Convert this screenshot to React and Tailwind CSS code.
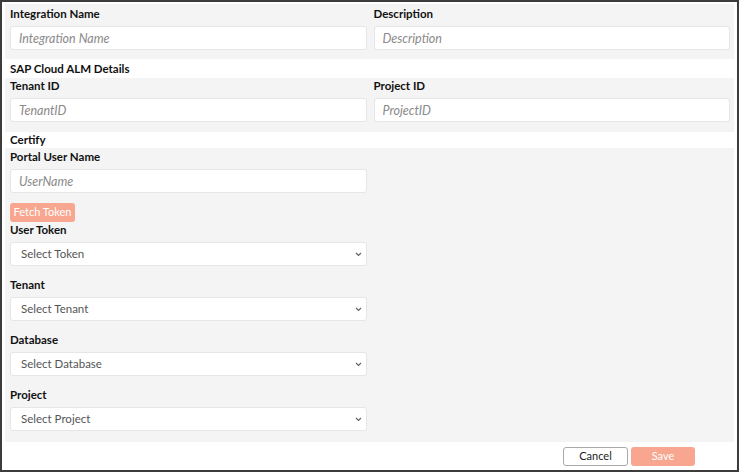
import React from 'react';

const font = { fontFamily: 'Lato, "Noto Sans", sans-serif' };

const TextField = ({ label, placeholder }) => (
  <div className="flex flex-col">
    <label className="text-[11.5px] font-bold leading-[16px] text-[#111] mb-[4px]">{label}</label>
    <input
      type="text"
      placeholder={placeholder}
      className="block h-[24px] w-full rounded-[3px] border border-[#e6e6e6] bg-white px-[8px] text-[12.5px] italic text-[#333] outline-none placeholder:text-[#8a8a8a]"
    />
  </div>
);

const SelectField = ({ label, placeholder }) => (
  <div className="flex flex-col mb-[11px]">
    <label className="text-[11.5px] font-bold leading-[16px] text-[#111] mb-[4px]">{label}</label>
    <div className="relative">
      <select className="block h-[24px] w-full appearance-none rounded-[3px] border border-[#e6e6e6] bg-white py-0 pl-[10px] text-[11.5px] leading-[22px] text-[#555] outline-none">
        <option>{placeholder}</option>
      </select>
      <svg className="pointer-events-none absolute right-[5px] top-[10px]" width="7" height="5" viewBox="0 0 7 5">
        <path d="M1 1l2.5 2.5L6 1" fill="none" stroke="#666" strokeWidth="1.2" />
      </svg>
    </div>
  </div>
);

export default function App() {
  return (
    <div style={font} className="w-[739px] h-[472px] border-2 border-[#3c3c3c] bg-white px-[3px] pt-[2px] flex flex-col">
      {/* Integration */}
      <div className="grid grid-cols-2 gap-x-[7px] bg-[#f4f4f4] pl-[5px] pr-[4px] pt-[2px] pb-[9px]">
        <TextField label="Integration Name" placeholder="Integration Name" />
        <TextField label="Description" placeholder="Description" />
      </div>

      <div className="px-[5px] text-[11.5px] font-bold leading-[19px] text-[#111]">SAP Cloud ALM Details</div>
      <div className="grid grid-cols-2 gap-x-[7px] bg-[#f4f4f4] pl-[5px] pr-[4px] pb-[10px]">
        <TextField label="Tenant ID" placeholder="TenantID" />
        <TextField label="Project ID" placeholder="ProjectID" />
      </div>

      <div className="px-[5px] text-[11.5px] font-bold leading-[16px] text-[#111]">Certify</div>
      <div className="grid grid-cols-2 gap-x-[7px] bg-[#f4f4f4] pl-[5px] pr-[4px] pt-[1px] pb-[0px]">
        <div className="flex flex-col">
          <TextField label="Portal User Name" placeholder="UserName" />
          <button className="mt-[10px] h-[19px] w-[65px] rounded-[3px] bg-[#f9a690] text-[11px] text-white">Fetch Token</button>
          <SelectField label="User Token" placeholder="Select Token" />
          <SelectField label="Tenant" placeholder="Select Tenant" />
          <SelectField label="Database" placeholder="Select Database" />
          <SelectField label="Project" placeholder="Select Project" />
        </div>
        <div />
      </div>

      <div className="flex justify-end gap-[3px] pr-[39px] pt-[5px]">
        <button className="h-[19px] w-[65px] rounded-[3px] border border-[#a9a9a9] bg-white text-[11px] text-[#222]">Cancel</button>
        <button className="h-[19px] w-[64px] rounded-[3px] bg-[#f9a690] text-[11px] text-white">Save</button>
      </div>
    </div>
  );
}
